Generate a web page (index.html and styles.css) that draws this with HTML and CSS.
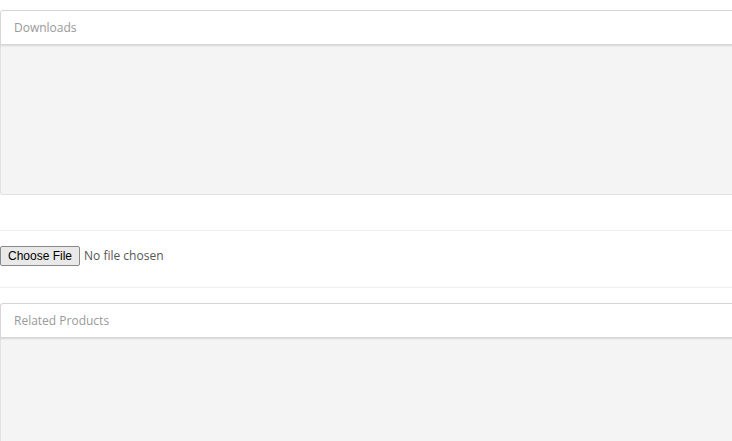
FILE: index.html
```html
<!DOCTYPE html>
<html lang="en">
<head>
<meta charset="utf-8">
<title>Product</title>
<link rel="stylesheet" href="styles.css">
</head>
<body>
<div class="page">
  <section class="panel">
    <header class="panel-heading">Downloads</header>
    <div class="panel-body"></div>
  </section>
  <div class="upload-row">
    <input class="file-input" type="file">
  </div>
  <section class="panel panel-related">
    <header class="panel-heading">Related Products</header>
    <div class="panel-body"></div>
  </section>
</div>
</body>
</html>
```
FILE: styles.css
```css
html, body {
  margin: 0;
  padding: 0;
  background: #ffffff;
  overflow: hidden;
}
body {
  font-family: "Open Sans", "Liberation Sans", sans-serif;
  font-size: 12px;
  color: #555555;
}
.page {
  width: 760px;
  padding-top: 10px;
}
.panel {
  display: flex;
  flex-direction: column;
}
.panel-heading {
  position: relative;
  z-index: 1;
  height: 33px;
  line-height: 33px;
  padding: 0 13px;
  background: #ffffff;
  border: 1px solid #d6d6d6;
  border-radius: 3px 3px 0 0;
  box-shadow: 0 1px 2px rgba(0, 0, 0, 0.12);
  color: #999999;
  font-size: 12px;
}
.panel-body {
  height: 149px;
  background: #f4f4f4;
  border: 1px solid #e2e2e2;
  border-top: none;
  border-radius: 0 0 3px 3px;
}
.upload-row {
  margin-top: 35px;
  border-top: 1px solid #eeeeee;
  border-bottom: 1px solid #eeeeee;
  padding: 15px 0 21px;
  height: 20px;
}
.file-input {
  font-family: "Open Sans", "Liberation Sans", sans-serif;
  font-size: 12px;
  color: #555555;
  margin: 0;
  padding: 0;
  height: 20px;
}
.file-input::file-selector-button {
  font-family: "Liberation Sans", Arial, sans-serif;
  font-size: 12px;
  color: #000000;
  height: 20px;
  padding: 0 7px;
  margin: 0 4px 0 0;
  background: #e9e9e9;
  border: 1px solid #8a8a8a;
  border-radius: 2px;
}
.panel-related {
  margin-top: 15px;
}
```
